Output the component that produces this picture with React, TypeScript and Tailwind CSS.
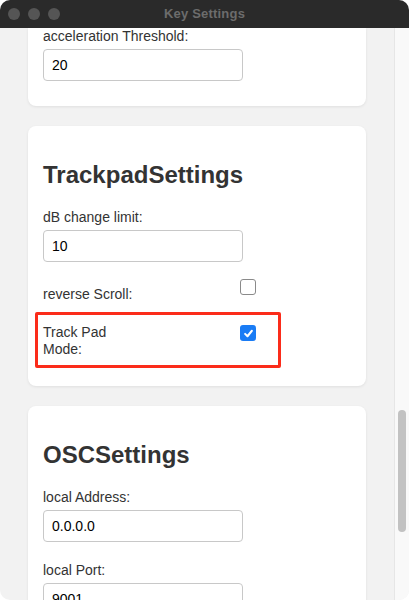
import React from "react";

const font = { fontFamily: '"Liberation Sans", Arial, sans-serif' };

function Field({ label, value, last }: { label: string; value: string; last?: boolean }) {
  return (
    <div className={last ? "" : "mb-[20px]"}>
      <div className="text-[14px] leading-[16px] text-[#333]">{label}</div>
      <div className="mt-[5px] w-[200px] h-[32px] border border-[#c8c8c8] rounded-[4px] bg-white flex items-center px-[8px] text-[14px] text-black">
        {value}
      </div>
    </div>
  );
}

function Checkbox({ checked }: { checked?: boolean }) {
  if (checked) {
    return (
      <div className="w-[16px] h-[16px] rounded-[3px] bg-[#1a7cf5] flex items-center justify-center">
        <svg width="11" height="11" viewBox="0 0 12 12">
          <path d="M2.3 6.4 L4.9 9 L9.7 3" stroke="white" strokeWidth="2.2" fill="none" strokeLinecap="round" strokeLinejoin="round" />
        </svg>
      </div>
    );
  }
  return <div className="w-[16px] h-[16px] rounded-[3px] border border-[#8a8a8a] bg-white" />;
}

export default function App() {
  return (
    <div className="w-[409px] h-[600px] bg-white overflow-hidden" style={font}>
      <div className="w-[409px] h-[600px] rounded-[10px] overflow-hidden flex flex-col bg-[#f2f2f2]">
        <div className="h-[28px] shrink-0 bg-[#2a2a2a] relative flex items-center justify-center">
          <div className="absolute left-[8px] top-[8px] flex gap-[8px]">
            <div className="w-[12px] h-[12px] rounded-full bg-[#555]" />
            <div className="w-[12px] h-[12px] rounded-full bg-[#555]" />
            <div className="w-[12px] h-[12px] rounded-full bg-[#555]" />
          </div>
          <div className="text-[13px] font-bold text-[#6c6c6c] tracking-[0.2px]">Key Settings</div>
        </div>
        <div className="flex-1 flex min-h-0">
          <div className="flex-1 overflow-hidden flex flex-col items-center">
            {/* card 1 (scrolled, top out of view) */}
            <div className="w-[338px] shrink-0 bg-white rounded-b-[8px] shadow-[0_1px_3px_rgba(0,0,0,0.08)] px-[15px] pb-[25px]">
              <Field label="acceleration Threshold:" value="20" last />
            </div>
            {/* card 2 */}
            <div className="w-[338px] shrink-0 mt-[20px] bg-white rounded-[8px] shadow-[0_1px_3px_rgba(0,0,0,0.08)] px-[15px] pt-[35px] pb-[18px]">
              <h2 className="text-[24px] leading-[28px] font-bold text-[#333] mb-[20px]">TrackpadSettings</h2>
              <Field label="dB change limit:" value="10" />
              <div className="flex items-start h-[30px]">
                <div className="w-[197px] pt-[4px] text-[14px] leading-[16px] text-[#333]">reverse Scroll:</div>
                <div className="-mt-[3px]">
                  <Checkbox />
                </div>
              </div>
              <div className="-mx-[8px] w-[246px] h-[56px] border-[3px] border-[#fb2c1a] rounded-[2px] flex items-start pt-[9px] px-[5px]">
                <div className="w-[197px] text-[14px] leading-[17px] text-[#333]">
                  Track Pad
                  <br />
                  Mode:
                </div>
                <div className="mt-[1px]">
                  <Checkbox checked />
                </div>
              </div>
            </div>
            {/* card 3 */}
            <div className="w-[338px] shrink-0 mt-[20px] bg-white rounded-[8px] shadow-[0_1px_3px_rgba(0,0,0,0.08)] px-[15px] pt-[35px] pb-[20px]">
              <h2 className="text-[24px] leading-[28px] font-bold text-[#333] mb-[20px]">OSCSettings</h2>
              <Field label="local Address:" value="0.0.0.0" />
              <Field label="local Port:" value="9001" />
            </div>
          </div>
          <div className="w-[15px] shrink-0 bg-[#f9f9f9] border-l border-[#e6e6e6] flex flex-col items-center">
            <div className="mt-[382px] w-[8px] h-[122px] rounded-full bg-[#c2c2c2]" />
          </div>
        </div>
      </div>
    </div>
  );
}
